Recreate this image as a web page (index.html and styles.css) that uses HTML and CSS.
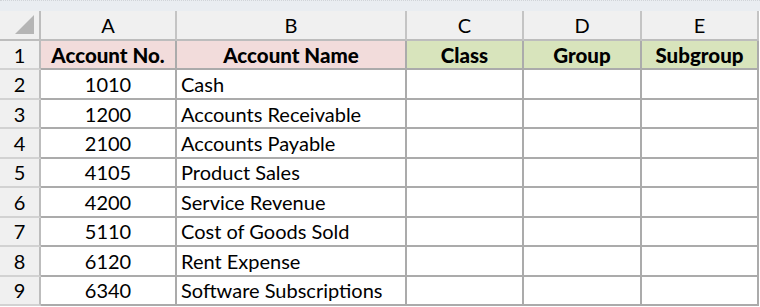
FILE: index.html
```html
<!DOCTYPE html>
<html>
<head>
<meta charset="utf-8">
<link rel="stylesheet" href="styles.css">
</head>
<body>
<div class="strip"></div>
<div class="sheet">
  <div class="corner"><svg width="19" height="19" viewBox="0 0 19 19"><polygon points="19,0 19,19 0,19" fill="#b5b5b5"/></svg></div>
  <div class="colhdr">A</div>
  <div class="colhdr">B</div>
  <div class="colhdr">C</div>
  <div class="colhdr">D</div>
  <div class="colhdr">E</div>

  <div class="rowhdr">1</div>
  <div class="cell head pink">Account No.</div>
  <div class="cell head pink">Account Name</div>
  <div class="cell head green">Class</div>
  <div class="cell head green">Group</div>
  <div class="cell head green">Subgroup</div>

  <div class="rowhdr">2</div>
  <div class="cell num">1010</div>
  <div class="cell name">Cash</div>
  <div class="cell"></div><div class="cell"></div><div class="cell"></div>

  <div class="rowhdr">3</div>
  <div class="cell num">1200</div>
  <div class="cell name">Accounts Receivable</div>
  <div class="cell"></div><div class="cell"></div><div class="cell"></div>

  <div class="rowhdr">4</div>
  <div class="cell num">2100</div>
  <div class="cell name">Accounts Payable</div>
  <div class="cell"></div><div class="cell"></div><div class="cell"></div>

  <div class="rowhdr">5</div>
  <div class="cell num">4105</div>
  <div class="cell name">Product Sales</div>
  <div class="cell"></div><div class="cell"></div><div class="cell"></div>

  <div class="rowhdr">6</div>
  <div class="cell num">4200</div>
  <div class="cell name">Service Revenue</div>
  <div class="cell"></div><div class="cell"></div><div class="cell"></div>

  <div class="rowhdr">7</div>
  <div class="cell num">5110</div>
  <div class="cell name">Cost of Goods Sold</div>
  <div class="cell"></div><div class="cell"></div><div class="cell"></div>

  <div class="rowhdr">8</div>
  <div class="cell num">6120</div>
  <div class="cell name">Rent Expense</div>
  <div class="cell"></div><div class="cell"></div><div class="cell"></div>

  <div class="rowhdr">9</div>
  <div class="cell num">6340</div>
  <div class="cell name">Software Subscriptions</div>
  <div class="cell"></div><div class="cell"></div><div class="cell"></div>
</div>
</body>
</html>
```
FILE: styles.css
```css
html, body {
  margin: 0;
  padding: 0;
  background: #ffffff;
}
body {
  font-family: Lato, "Liberation Sans", sans-serif;
  font-size: 20px;
  color: #000;
  width: 760px;
  height: 307px;
  overflow: hidden;
}
.strip {
  height: 10px;
  background: #e9edf1;
  border-top: 1px dotted #d0d4d8;
}
.sheet {
  display: grid;
  grid-template-columns: 41px 136px 230px 117px 118px 117px;
  grid-template-rows: 30px repeat(9, 29.45px);
}
.corner {
  background: #f0f0f0;
  border-right: 2px solid #bdbdbd;
  border-bottom: 2px solid #bdbdbd;
  display: flex;
  align-items: flex-end;
  justify-content: flex-end;
  padding: 0 5px 5px 0;
  box-sizing: border-box;
}
.colhdr {
  background: #f0f0f0;
  border-right: 2px solid #c4c4c4;
  border-bottom: 2px solid #bdbdbd;
  display: flex;
  align-items: center;
  justify-content: center;
}
.rowhdr {
  background: #f0f0f0;
  border-right: 2px solid #bdbdbd;
  border-bottom: 2px solid #d2d2d2;
  display: flex;
  align-items: center;
  justify-content: center;
}
.cell {
  border-right: 2px solid #ababab;
  border-bottom: 2px solid #ababab;
  display: flex;
  align-items: center;
  white-space: nowrap;
  overflow: hidden;
}
.head {
  font-weight: 900;
  font-size: 20.5px;
  justify-content: center;
}
.pink { background: #f2dcdb; }
.green { background: #d8e4bc; }
.num { justify-content: center; }
.name { padding-left: 4px; }
```
